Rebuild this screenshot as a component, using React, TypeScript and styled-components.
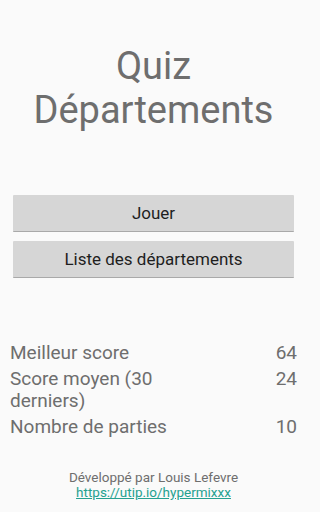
import React from 'react';
import styled, { createGlobalStyle } from 'styled-components';

const GlobalStyle = createGlobalStyle`
    html, body {
        margin: 0;
        padding: 0;
        background-color: #fafafa;
    }
    body {
        font-family: Roboto, "Liberation Sans", sans-serif;
    }
`

const stats = [
    { label: 'Meilleur score', value: 64 },
    { label: 'Score moyen (30 derniers)', value: 24 },
    { label: 'Nombre de parties', value: 10 },
];

function App() {
    return (
        <>
            <GlobalStyle />
            <Page>
                <Title>Quiz<br />Départements</Title>
                <Menu>
                    <MenuButton>Jouer</MenuButton>
                    <MenuButton>Liste des départements</MenuButton>
                </Menu>
                <Stats>
                    {stats.map(it => (
                        <StatRow key={it.label}>
                            <StatLabel>{it.label}</StatLabel>
                            <StatValue>{it.value}</StatValue>
                        </StatRow>
                    ))}
                </Stats>
                <Footer>
                    <div>Développé par Louis Lefevre</div>
                    <FooterLink href="#">https://utip.io/hypermixxx</FooterLink>
                </Footer>
            </Page>
        </>
    )
}

export default App;

const Page = styled.div`
    width: 307px;
    height: 512px;
    display: flex;
    flex-direction: column;
    overflow: hidden;
`
const Title = styled.h1`
    margin: 44px 0 0;
    font-size: 38px;
    font-weight: 400;
    line-height: 44px;
    text-align: center;
    color: #6e6e6e;
`
const Menu = styled.div`
    margin: 63px 13px 0;
    display: flex;
    flex-direction: column;
    gap: 9px;
`
const MenuButton = styled.button`
    height: 37px;
    border: none;
    border-bottom: 1px solid #a9a9a9;
    border-radius: 1px;
    background-color: #d6d6d6;
    color: #1e1e1e;
    font-family: Roboto, "Liberation Sans", sans-serif;
    font-size: 17px;
    padding: 0;
`
const Stats = styled.div`
    margin: 64px 10px 0;
    display: flex;
    flex-direction: column;
    gap: 4px;
`
const StatRow = styled.div`
    display: grid;
    grid-template-columns: 180px 1fr;
    font-size: 19px;
    line-height: 22px;
    color: #6e6e6e;
`
const StatLabel = styled.div``
const StatValue = styled.div`
    text-align: right;
`
const Footer = styled.div`
    margin-top: 32px;
    text-align: center;
    font-size: 13.5px;
    line-height: 15px;
    color: #6e6e6e;
`
const FooterLink = styled.a`
    color: #26a190;
    text-decoration: underline;
`
